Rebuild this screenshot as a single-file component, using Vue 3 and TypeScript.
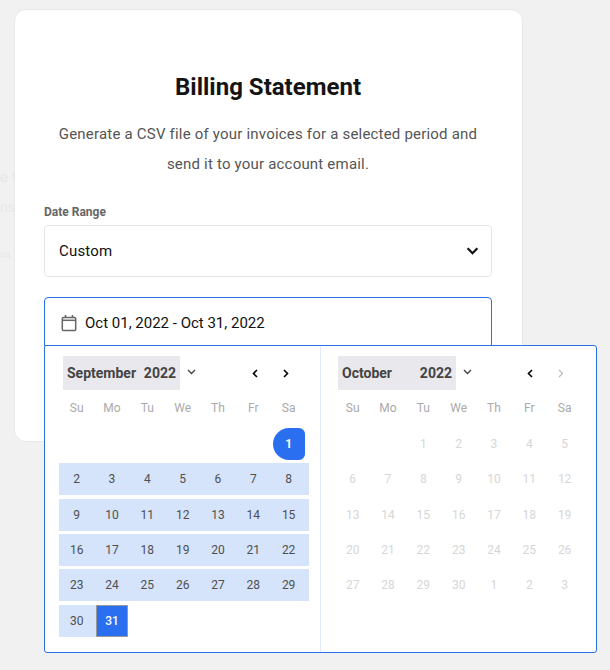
<script setup lang="ts">
const weekdays = ['Su', 'Mo', 'Tu', 'We', 'Th', 'Fr', 'Sa']

interface Day {
  label: string
  cls: string
}

function blanks(n: number): Day[] {
  return Array.from({ length: n }, () => ({ label: '', cls: 'blank' }))
}

function nums(from: number, to: number, cls: string): Day[] {
  const out: Day[] = []
  for (let i = from; i <= to; i++) {
    out.push({ label: String(i), cls })
  }
  return out
}

const septDays: Day[] = [
  ...blanks(6),
  { label: '1', cls: 'start' },
  ...nums(2, 30, 'range'),
  { label: '31', cls: 'end' },
]

const octDays: Day[] = [
  ...blanks(2),
  ...nums(1, 30, 'off'),
  ...nums(1, 3, 'off'),
]
</script>

<template>
  <div class="page">
    <div class="ghost">
      <span class="g1">e t</span>
      <span class="g2">ns</span>
      <span class="g3">us</span>
    </div>

    <div class="card">
      <h1 class="title">Billing Statement</h1>
      <p class="desc">
        Generate a CSV file of your invoices for a selected period and<br />
        send it to your account email.
      </p>

      <div class="label">Date Range</div>
      <div class="select">
        <span class="select-value">Custom</span>
        <svg class="select-arrow" width="13" height="8" viewBox="0 0 14 9">
          <path d="M1.500 1.500 7 7l5.500-5.500" fill="none" stroke="#111" stroke-width="2.500" />
        </svg>
      </div>

      <div class="date-input">
        <svg class="cal-icon" width="16" height="18" viewBox="0 0 16 18">
          <path d="M2.500 3.500h11a1.200 1.200 0 0 1 1.200 1.200v10.600a1.200 1.200 0 0 1-1.200 1.200h-11a1.200 1.200 0 0 1-1.200-1.200V4.700a1.200 1.200 0 0 1 1.200-1.200z" fill="none" stroke="#666" stroke-width="1.500" />
          <path d="M1.500 6.300h13" stroke="#666" stroke-width="1.500" />
          <path d="M4.500 1v3M11.500 1v3" stroke="#666" stroke-width="1.600" />
        </svg>
        <span>Oct 01, 2022 - Oct 31, 2022</span>
      </div>
    </div>

    <div class="picker">
      <div class="month left">
        <div class="head">
          <div class="month-select"><span>September</span><span>2022</span></div>
          <svg class="chev" width="9" height="6" viewBox="0 0 9 6"><path d="M1 1l3.500 3.500L8 1" fill="none" stroke="#444" stroke-width="1.400" /></svg>
          <svg class="nav prev" width="6" height="9" viewBox="0 0 6 9"><path d="M5 1 1.500 4.500 5 8" fill="none" stroke="#000" stroke-width="1.600" /></svg>
          <svg class="nav next" width="6" height="9" viewBox="0 0 6 9"><path d="M1 1l3.500 3.500L1 8" fill="none" stroke="#000" stroke-width="1.600" /></svg>
        </div>
        <div class="grid weekdays">
          <span v-for="w in weekdays" :key="w">{{ w }}</span>
        </div>
        <div class="grid days">
          <div v-for="(d, i) in septDays" :key="i" class="cell" :class="d.cls">
            <span>{{ d.label }}</span>
          </div>
        </div>
      </div>

      <div class="month right">
        <div class="head">
          <div class="month-select"><span>October</span><span>2022</span></div>
          <svg class="chev" width="9" height="6" viewBox="0 0 9 6"><path d="M1 1l3.500 3.500L8 1" fill="none" stroke="#444" stroke-width="1.400" /></svg>
          <svg class="nav prev" width="6" height="9" viewBox="0 0 6 9"><path d="M5 1 1.500 4.500 5 8" fill="none" stroke="#000" stroke-width="1.600" /></svg>
          <svg class="nav next" width="6" height="9" viewBox="0 0 6 9"><path d="M1 1l3.500 3.500L1 8" fill="none" stroke="#bbb" stroke-width="1.200" /></svg>
        </div>
        <div class="grid weekdays">
          <span v-for="w in weekdays" :key="w">{{ w }}</span>
        </div>
        <div class="grid days">
          <div v-for="(d, i) in octDays" :key="i" class="cell" :class="d.cls">
            <span>{{ d.label }}</span>
          </div>
        </div>
      </div>
    </div>
  </div>
</template>

<style>
html,
body {
  margin: 0;
  background: #f1f1f1;
}
</style>

<style scoped>
.page {
  position: relative;
  width: 610px;
  height: 670px;
  padding: 9px 0 0 14px;
  box-sizing: border-box;
  overflow: hidden;
  background: #f1f1f1;
  font-family: Roboto, sans-serif;
}

.ghost span {
  position: absolute;
  left: 0;
  color: #e8e8e8;
}

.g1 {
  top: 168px;
  font-size: 15px;
}

.g2 {
  top: 199px;
  font-size: 14px;
}

.g3 {
  top: 249px;
  font-size: 10px;
}

.card {
  position: relative;
  width: 509px;
  height: 433px;
  box-sizing: border-box;
  padding: 60px 30px 0 29px;
  background: #fff;
  border: 1px solid #e8e8e8;
  border-radius: 12px;
}

.title {
  margin: 0;
  font-size: 24px;
  line-height: 34px;
  font-weight: 700;
  color: #141414;
  text-align: center;
}

.desc {
  margin: 15px 0 0;
  font-size: 15px;
  line-height: 30px;
  color: #555;
  text-align: center;
  letter-spacing: 0.2px;
}

.label {
  margin-top: 25px;
  font-size: 12px;
  line-height: 16px;
  font-weight: 700;
  color: #666;
}

.select {
  display: flex;
  align-items: center;
  justify-content: space-between;
  height: 52px;
  margin-top: 5px;
  padding: 0 12px 0 14px;
  box-sizing: border-box;
  border: 1px solid #e6e6e6;
  border-radius: 4px;
  font-size: 15px;
  color: #111;
}

.select-value {
  letter-spacing: 0.2px;
}

.date-input {
  display: flex;
  align-items: center;
  height: 52px;
  margin-top: 20px;
  padding-left: 16px;
  box-sizing: border-box;
  border: 1px solid #2a6ee8;
  border-radius: 4px;
  font-size: 15px;
  color: #111;
}

.cal-icon {
  margin-right: 8px;
}

.picker {
  position: absolute;
  left: 44px;
  top: 345px;
  display: flex;
  width: 553px;
  height: 308px;
  box-sizing: border-box;
  background: #fff;
  border: 1px solid #2a6ee8;
  border-radius: 2px 3px 3px 3px;
}

.month {
  box-sizing: border-box;
  padding: 10px 0 0 14px;
}

.month.left {
  width: 276px;
  border-right: 1px solid #e1eafa;
}

.month.right {
  flex: 1;
  padding-left: 13px;
}

.head {
  position: relative;
  height: 34px;
  margin-left: 4px;
}

.month-select {
  display: flex;
  justify-content: space-between;
  align-items: center;
  width: 117px;
  height: 34px;
  padding: 0 4px;
  box-sizing: border-box;
  background: #e9e8ec;
  font-size: 14px;
  font-weight: 700;
  color: #444;
}

.right .month-select {
  width: 118px;
}

.chev {
  position: absolute;
  left: 125px;
  top: 13px;
}

.left .chev {
  left: 124px;
}

.nav {
  position: absolute;
  top: 13px;
}

.prev {
  left: 189px;
}

.next {
  left: 220px;
}

.right .grid {
  margin-left: 1px;
}

.grid {
  display: grid;
  grid-template-columns: repeat(7, 35.33px);
}

.weekdays {
  margin-top: 9px;
  height: 29px;
  font-size: 12px;
  line-height: 18px;
  font-weight: 400;
  color: #aaa;
  text-align: center;
}

.days {
  row-gap: 3.33px;
  font-size: 12px;
  font-weight: 400;
  color: #4f4f4f;
}

.cell {
  display: flex;
  justify-content: center;
  align-items: center;
  height: 32px;
}

.cell span {
  display: flex;
  justify-content: center;
  align-items: center;
  width: 32px;
  height: 32px;
  flex: none;
  box-sizing: border-box;
}

.range {
  background: #d5e3fb;
  box-shadow: 2px 0 0 #d5e3fb;
}

.range:nth-child(7n) {
  margin-right: -3px;
  padding-right: 3px;
  box-shadow: none;
}

.off {
  color: #d6d6d6;
}

.start span {
  background: #2a6ff0;
  color: #fff;
  font-weight: 700;
  border-radius: 50% 6px 6px 50%;
}

.end span {
  position: relative;
  background: #2a6ff0;
  color: #fff;
  font-weight: 500;
  border: 1px solid #999;
}
</style>
